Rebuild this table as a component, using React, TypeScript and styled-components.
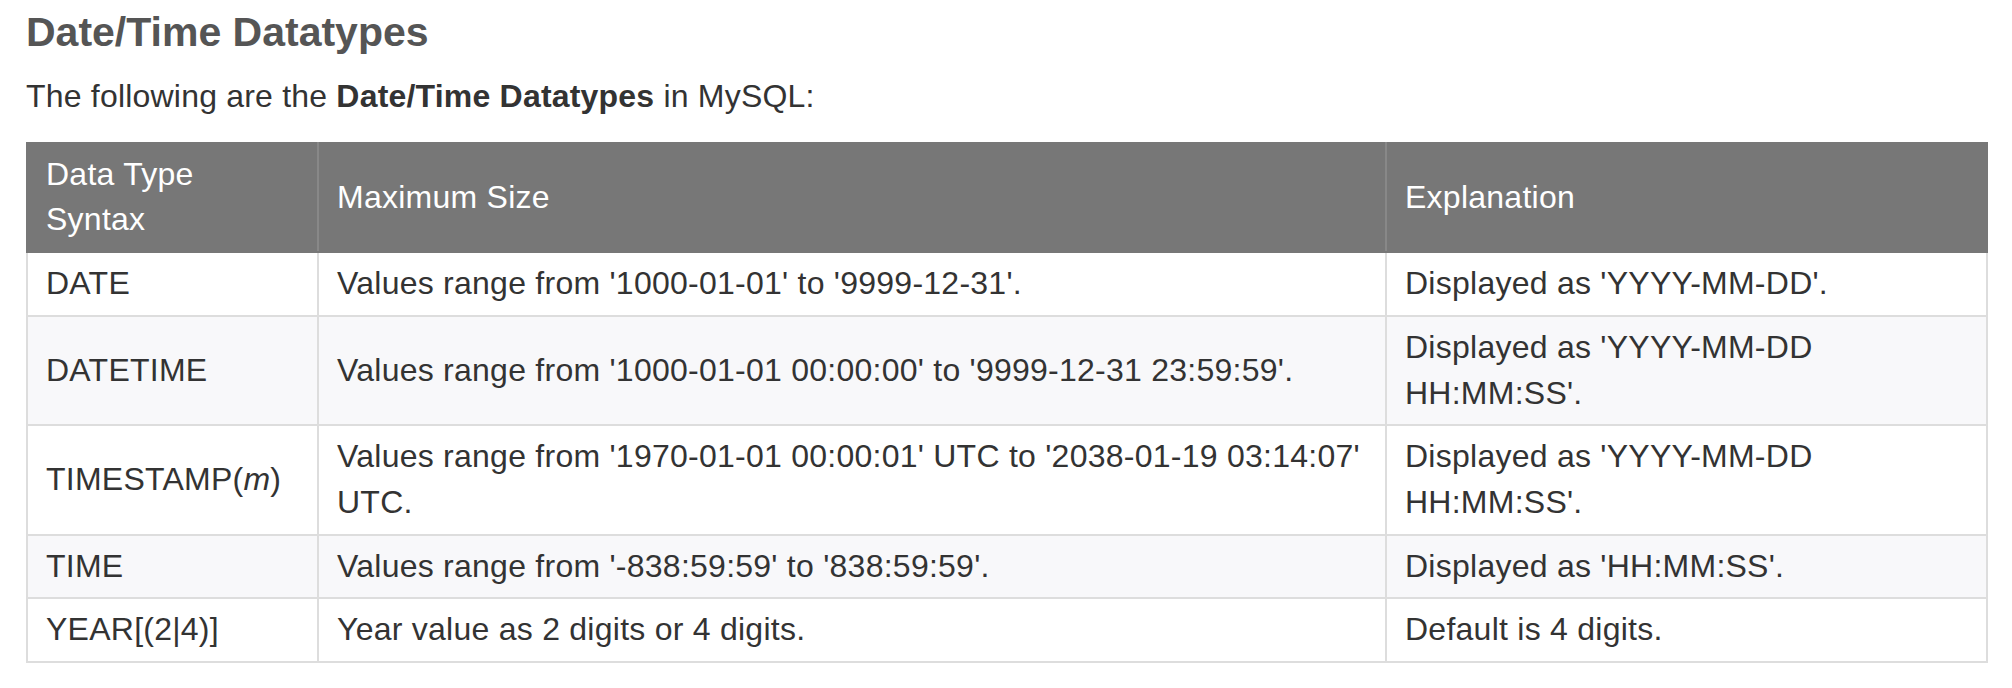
import React from 'react'
import styled, { createGlobalStyle } from 'styled-components'

type Row = {
  syntax: React.ReactNode
  size: string
  explanation: string
}

const rows: Row[] = [
  {
    syntax: 'DATE',
    size: "Values range from '1000-01-01' to '9999-12-31'.",
    explanation: "Displayed as 'YYYY-MM-DD'.",
  },
  {
    syntax: 'DATETIME',
    size: "Values range from '1000-01-01 00:00:00' to '9999-12-31 23:59:59'.",
    explanation: "Displayed as 'YYYY-MM-DD HH:MM:SS'.",
  },
  {
    syntax: (
      <>
        TIMESTAMP(<em>m</em>)
      </>
    ),
    size: "Values range from '1970-01-01 00:00:01' UTC to '2038-01-19 03:14:07' UTC.",
    explanation: "Displayed as 'YYYY-MM-DD HH:MM:SS'.",
  },
  {
    syntax: 'TIME',
    size: "Values range from '-838:59:59' to '838:59:59'.",
    explanation: "Displayed as 'HH:MM:SS'.",
  },
  {
    syntax: 'YEAR[(2|4)]',
    size: 'Year value as 2 digits or 4 digits.',
    explanation: 'Default is 4 digits.',
  },
]

export default function App() {
  return (
    <>
      <GlobalStyle />
      <Page>
        <Title>Date/Time Datatypes</Title>
        <Intro>
          The following are the <strong>Date/Time Datatypes</strong> in MySQL:
        </Intro>
        <DataTable>
          <colgroup>
            <col style={{ width: 291 }} />
            <col style={{ width: 1068 }} />
            <col />
          </colgroup>
          <thead>
            <tr>
              <HeadCell>Data Type Syntax</HeadCell>
              <HeadCell>Maximum Size</HeadCell>
              <HeadCell>Explanation</HeadCell>
            </tr>
          </thead>
          <tbody>
            {rows.map((row, i) => (
              <BodyRow key={i} $striped={i % 2 === 1}>
                <Cell>{row.syntax}</Cell>
                <Cell $tight>{row.size}</Cell>
                <Cell>{row.explanation}</Cell>
              </BodyRow>
            ))}
          </tbody>
        </DataTable>
      </Page>
    </>
  )
}

const GlobalStyle = createGlobalStyle`
  html, body {
    margin: 0;
    padding: 0;
    background: #fff;
  }
  body {
    font-family: "Liberation Sans", Arial, Helvetica, sans-serif;
    color: #333;
  }
`

const Page = styled.div`
  padding: 10px 24px 0 26px;
`

const Title = styled.h2`
  margin: 0;
  font-size: 41px;
  line-height: 44px;
  font-weight: 700;
  color: #555;
`

const Intro = styled.p`
  margin: 20px 0 22px;
  font-size: 32px;
  line-height: 1.42857;
  letter-spacing: 0.2px;
  color: #333;

  strong {
    font-weight: 700;
  }
`

const DataTable = styled.table`
  width: 100%;
  table-layout: fixed;
  border-collapse: collapse;
  border: 2px solid #ddd;
  font-size: 32px;
  line-height: 1.42857;
  letter-spacing: 0.25px;
`

const HeadCell = styled.th`
  padding: 8px 18px;
  background: #777;
  color: #fff;
  font-weight: 400;
  text-align: left;
  vertical-align: middle;
  border: 2px solid #777;
  border-left-color: #888;
  border-right-color: #888;

  &:first-child {
    border-left-color: #777;
  }
  &:last-child {
    border-right-color: #777;
  }
`

const BodyRow = styled.tr<{ $striped: boolean }>`
  background: ${({ $striped }) => ($striped ? '#f8f8fa' : '#fff')};
`

const Cell = styled.td<{ $tight?: boolean }>`
  padding: 8px ${({ $tight }) => ($tight ? '8px' : '18px')} 8px 18px;
  border: 2px solid #ddd;
  vertical-align: middle;
  color: #333;

  em {
    font-style: italic;
  }
`
